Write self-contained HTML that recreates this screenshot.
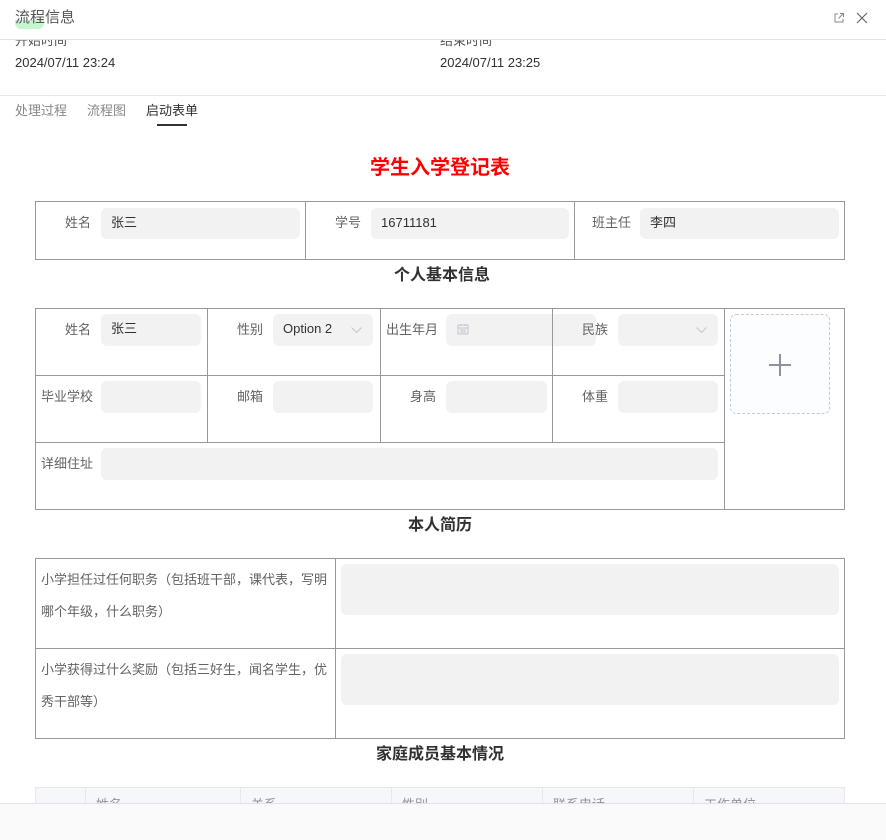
<!DOCTYPE html>
<html><head><meta charset="utf-8"><style>
*{margin:0;padding:0;box-sizing:border-box}
body{width:886px;height:840px;overflow:hidden;background:#fff;position:relative;font-family:"Liberation Sans","Noto Sans CJK SC",sans-serif;color:#606266}
.a{position:absolute}
.t{font-size:13px;color:#606266;white-space:nowrap;line-height:16px}
.in{position:absolute;background:#f2f2f2;border-radius:6px}
.v{font-size:13px;color:#303133;position:absolute;left:10px;top:7px;line-height:16px}
.h{position:absolute;background:#999}
.hd{font-size:16px;font-weight:bold;color:#303133;line-height:20px;position:absolute;text-align:center;width:300px}
</style></head><body>
<div class="a" style="left:15px;top:20px;width:29px;height:9px;background:#c6f5cf;border-radius:0 0 6px 6px"></div>
<div class="a" style="left:15px;top:8px;font-size:15px;color:#555;line-height:20px">流程信息</div>
<svg class="a" style="left:833px;top:12px" width="12" height="12" viewBox="0 0 12 12" fill="none" stroke="#888" stroke-width="1"><path d="M5 2H2v8h8V7M7 1.5h3.5V5M10.5 1.5L5.5 6.5"/></svg>
<svg class="a" style="left:856px;top:12px" width="12" height="12" viewBox="0 0 12 12" stroke="#666" stroke-width="1.2"><path d="M1 1L11 11M11 1L1 11"/></svg>
<div class="a" style="left:0;top:39px;width:886px;height:1px;background:#e4e4e4"></div>
<div class="a" style="left:0;top:40px;width:886px;height:9px;overflow:hidden"><div class="t" style="position:absolute;left:15px;top:-7px;color:#555">开始时间</div><div class="t" style="position:absolute;left:440px;top:-7px;color:#555">结束时间</div></div>
<div class="a t" style="left:15px;top:55px;color:#303133">2024/07/11 23:24</div>
<div class="a t" style="left:440px;top:55px;color:#303133">2024/07/11 23:25</div>
<div class="a" style="left:0;top:95px;width:886px;height:1px;background:#e8e8e8"></div>
<div class="a t" style="left:15px;top:103px;color:#888">处理过程</div>
<div class="a t" style="left:87px;top:103px;color:#888">流程图</div>
<div class="a t" style="left:146px;top:103px;color:#303133">启动表单</div>
<div class="a" style="left:157px;top:124px;width:30px;height:2px;background:#333"></div>

<div class="a" style="left:290px;top:156px;width:300px;text-align:center;font-size:20px;font-weight:bold;color:#f00;line-height:24px">学生入学登记表</div>

<div class="a" style="left:35px;top:201px;width:810px;height:59px;border:1px solid #999"></div>
<div class="h" style="left:305px;top:201px;width:1px;height:59px"></div>
<div class="h" style="left:574px;top:201px;width:1px;height:59px"></div>
<div class="a t" style="left:65px;top:215px">姓名</div>
<div class="in" style="left:101px;top:208px;width:199px;height:31px"><span class="v">张三</span></div>
<div class="a t" style="left:335px;top:215px">学号</div>
<div class="in" style="left:371px;top:208px;width:198px;height:31px"><span class="v">16711181</span></div>
<div class="a t" style="left:592px;top:215px">班主任</div>
<div class="in" style="left:640px;top:208px;width:199px;height:31px"><span class="v">李四</span></div>

<div class="hd" style="left:292px;top:266px">个人基本信息</div>

<div class="in" style="left:101px;top:314px;width:100px;height:32px"><span class="v">张三</span></div>
<div class="in" style="left:273px;top:314px;width:100px;height:32px"><span class="v">Option 2</span><svg style="position:absolute;left:78px;top:13px" width="11" height="6" viewBox="0 0 11 6" fill="none" stroke="#c0c4cc"><path d="M.5.5l5 5 5-5"/></svg></div>
<div class="in" style="left:446px;top:314px;width:150px;height:32px"><svg style="position:absolute;left:11px;top:9px" width="12" height="12" viewBox="0 0 12 12" fill="none" stroke="#c0c4cc"><rect x="1" y="2" width="10" height="9"/><path d="M1 5h10M4 1v2M8 1v2M3 7h6M3 9h6"/></svg></div>
<div class="in" style="left:618px;top:314px;width:100px;height:32px"><svg style="position:absolute;left:78px;top:13px" width="11" height="6" viewBox="0 0 11 6" fill="none" stroke="#c0c4cc"><path d="M.5.5l5 5 5-5"/></svg></div>
<div class="in" style="left:101px;top:381px;width:100px;height:32px"></div>
<div class="in" style="left:273px;top:381px;width:100px;height:32px"></div>
<div class="in" style="left:446px;top:381px;width:101px;height:32px"></div>
<div class="in" style="left:618px;top:381px;width:100px;height:32px"></div>
<div class="in" style="left:101px;top:448px;width:617px;height:32px"></div>
<div class="a" style="left:730px;top:314px;width:100px;height:100px;border:1px dashed #c0ccda;border-radius:6px;background:#fbfdff"></div>
<div class="a" style="left:769px;top:364px;width:22px;height:2px;background:#8c939d"></div>
<div class="a" style="left:779px;top:354px;width:2px;height:22px;background:#8c939d"></div>
<div class="a" style="left:35px;top:308px;width:810px;height:202px;border:1px solid #999"></div>
<div class="h" style="left:35px;top:375px;width:690px;height:1px"></div>
<div class="h" style="left:35px;top:442px;width:690px;height:1px"></div>
<div class="h" style="left:207px;top:308px;width:1px;height:134px"></div>
<div class="h" style="left:380px;top:308px;width:1px;height:134px"></div>
<div class="h" style="left:552px;top:308px;width:1px;height:134px"></div>
<div class="h" style="left:724px;top:308px;width:1px;height:202px"></div>
<div class="a t" style="left:65px;top:322px">姓名</div>
<div class="a t" style="left:237px;top:322px">性别</div>
<div class="a t" style="left:386px;top:322px">出生年月</div>
<div class="a t" style="left:582px;top:322px">民族</div>
<div class="a t" style="left:41px;top:389px">毕业学校</div>
<div class="a t" style="left:237px;top:389px">邮箱</div>
<div class="a t" style="left:410px;top:389px">身高</div>
<div class="a t" style="left:582px;top:389px">体重</div>
<div class="a t" style="left:41px;top:456px">详细住址</div>

<div class="hd" style="left:290px;top:516px">本人简历</div>

<div class="a" style="left:35px;top:558px;width:810px;height:181px;border:1px solid #999"></div>
<div class="h" style="left:335px;top:558px;width:1px;height:181px"></div>
<div class="h" style="left:35px;top:648px;width:810px;height:1px"></div>
<div class="a" style="left:41px;top:564px;font-size:13px;line-height:32px;width:290px;color:#606266">小学担任过任何职务（包括班干部，课代表，写明哪个年级，什么职务）</div>
<div class="a" style="left:41px;top:654px;font-size:13px;line-height:32px;width:290px;color:#606266">小学获得过什么奖励（包括三好生，闻名学生，优秀干部等）</div>
<div class="in" style="left:341px;top:564px;width:498px;height:51px"></div>
<div class="in" style="left:341px;top:654px;width:498px;height:51px"></div>

<div class="hd" style="left:290px;top:745px">家庭成员基本情况</div>

<div class="a" style="left:35px;top:787px;width:810px;height:30px;background:#f5f7fa;border:1px solid #e6e8eb"></div>
<div class="a" style="left:85px;top:787px;width:1px;height:20px;background:#e6e8eb"></div>
<div class="a" style="left:240px;top:787px;width:1px;height:20px;background:#e6e8eb"></div>
<div class="a" style="left:391px;top:787px;width:1px;height:20px;background:#e6e8eb"></div>
<div class="a" style="left:542px;top:787px;width:1px;height:20px;background:#e6e8eb"></div>
<div class="a" style="left:693px;top:787px;width:1px;height:20px;background:#e6e8eb"></div>
<div class="a t" style="left:96px;top:797px;color:#909399">姓名</div>
<div class="a t" style="left:251px;top:797px;color:#909399">关系</div>
<div class="a t" style="left:402px;top:797px;color:#909399">性别</div>
<div class="a t" style="left:553px;top:797px;color:#909399">联系电话</div>
<div class="a t" style="left:704px;top:797px;color:#909399">工作单位</div>

<div class="a" style="left:0;top:803px;width:886px;height:37px;background:#fafafa;border-top:1px solid #e2e2e2"></div>
</body></html>
